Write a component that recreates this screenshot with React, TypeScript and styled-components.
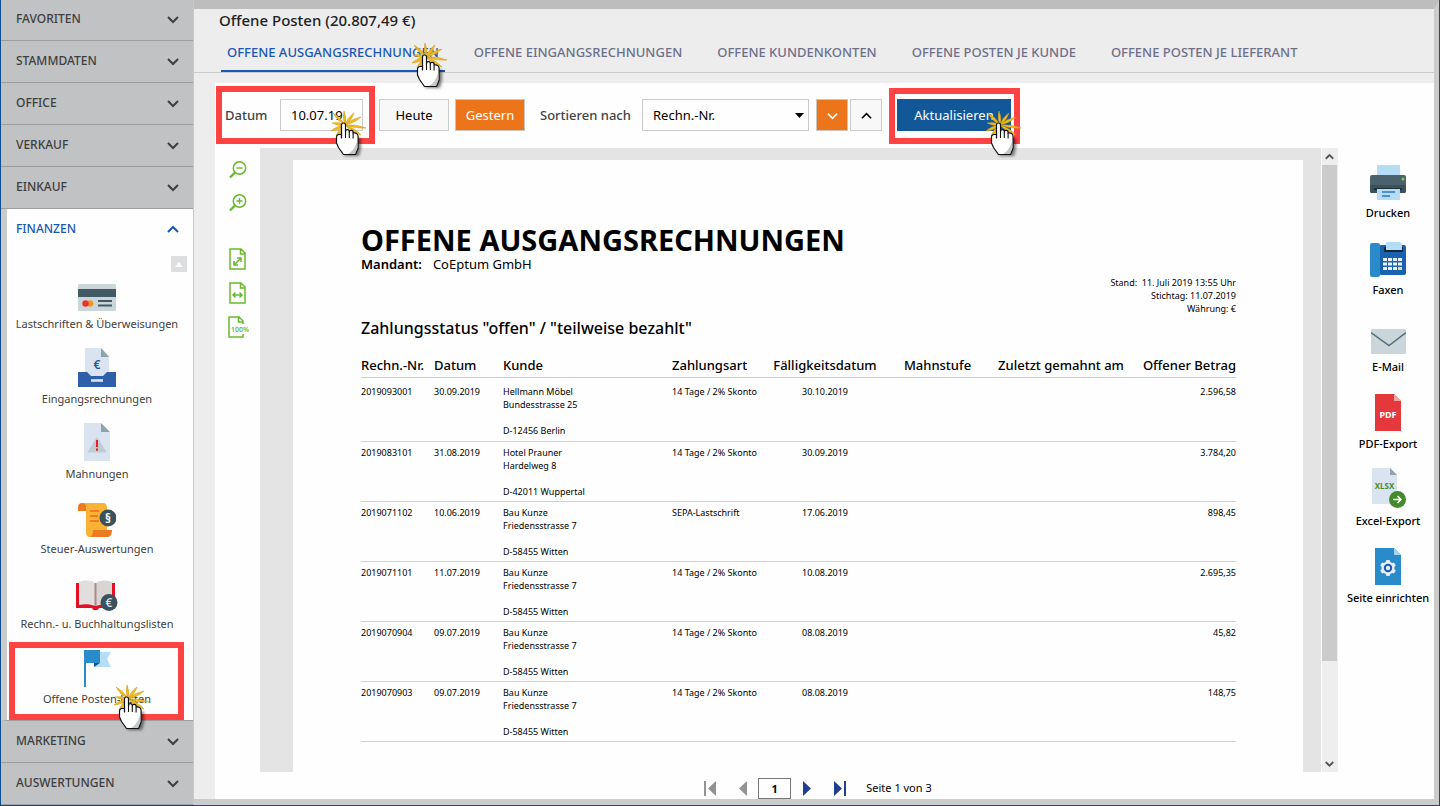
import React from 'react';
import styled, { createGlobalStyle, css } from 'styled-components';

const GlobalStyle = createGlobalStyle`
  * { box-sizing: border-box; }
  body {
    margin: 0;
    background: #fefefe;
    color: #000;
    font-family: 'Noto Sans', 'Open Sans', sans-serif;
    font-size: 13px;
    line-height: 18px;
  }
  button, input, select { font: inherit; color: inherit; margin: 0; }
  button { cursor: pointer; }
  svg { display: block; flex: none; }
`;

const RED = '#ff4242';

const Window = styled.div`
  display: flex;
  min-height: 100vh;
  border: 1px solid #0f4c91;
  border-top: 0;
`;

/* ---------- Sidebar ---------- */

const Sidebar = styled.nav`
  display: flex;
  flex-direction: column;
  flex: none;
  width: 193px;
  border-right: 1px solid #c9c9c9;
  background: #c0c2c4;
`;

const SectionButton = styled.button<{ $first?: boolean }>`
  display: flex;
  align-items: center;
  justify-content: space-between;
  width: 100%;
  height: ${(p) => (p.$first ? 41 : 42)}px;
  padding: 0 14px ${(p) => (p.$first ? 3 : 1)}px 15px;
  border: 0;
  border-bottom: 1px solid #9b9d9f;
  background: #c0c2c4;
  color: #3e3e40;
  font-size: 12px;
  font-weight: 500;
`;

const OpenSection = styled.section`
  flex: 1;
  border-left: 6px solid #cbcbcb;
  border-bottom: 1px solid #9b9d9f;
  background: #fefefe;
`;

const OpenSectionButton = styled(SectionButton)`
  padding-left: 9px;
  padding-bottom: 3px;
  border-bottom: 0;
  background: #fefefe;
  color: #1a57b5;
`;

const ScrollUpRow = styled.div`
  display: flex;
  justify-content: flex-end;
  padding: 5px 6px 0 0;
`;

const ScrollUp = styled.button`
  display: grid;
  place-items: center;
  width: 16px;
  height: 16px;
  padding: 0;
  border: 0;
  background: #dcdee0;
`;

const ModuleList = styled.div`
  display: grid;
  gap: 14px;
  padding: 0 6px 11px 0;
`;

const ModuleButton = styled.button`
  position: relative;
  display: flex;
  flex-direction: column;
  align-items: center;
  gap: 3px;
  width: 100%;
  padding: 0;
  border: 0;
  background: none;
  color: #3e3e40;
  font-size: 11px;
  line-height: 18px;
  white-space: nowrap;
`;

const ModuleIcon = styled.span`
  display: flex;
  align-items: flex-end;
  justify-content: center;
  height: 40px;
`;

/* ---------- Click markers ---------- */

const Marker = styled.span<{ $top: number; $right: number; $bottom: number; $left: number }>`
  position: absolute;
  z-index: 2;
  top: ${(p) => p.$top}px;
  right: ${(p) => p.$right}px;
  bottom: ${(p) => p.$bottom}px;
  left: ${(p) => p.$left}px;
  border: 6px solid ${RED};
  pointer-events: none;
`;

const HandHolder = styled.span<{ $right: number; $top: number }>`
  position: absolute;
  z-index: 3;
  right: ${(p) => p.$right}px;
  top: ${(p) => p.$top}px;
  pointer-events: none;
`;

const HandShadow = styled.path`
  filter: blur(1.5px);
`;

/* ---------- Main area ---------- */

const Main = styled.main`
  display: flex;
  flex-direction: column;
  flex: 1;
  min-width: 0;
  border-top: 9px solid #bdbdbd;
  border-right: 5px solid #cbcbcb;
  border-bottom: 6px solid #cbcbcb;
  background: #ededee;
`;

const PageTitle = styled.h1`
  margin: 0;
  padding: 0 25px 2px;
  font-size: 15px;
  line-height: 22px;
  font-weight: 500;
  color: #222;
`;

const Tabs = styled.div`
  display: flex;
  gap: 23px;
  padding: 0 27px;
  border-bottom: 1px solid #cdcdcd;
`;

const Tab = styled.button<{ $active?: boolean }>`
  position: relative;
  height: 39px;
  padding: 0 6px;
  border: 0;
  border-bottom: 2px solid ${(p) => (p.$active ? '#1a57b5' : 'transparent')};
  background: none;
  color: ${(p) => (p.$active ? '#1a57b5' : '#6d7089')};
  font-size: 13px;
  font-weight: 500;
  white-space: nowrap;
`;

const Card = styled.div`
  display: flex;
  flex-direction: column;
  flex: 1;
  margin: 10px 0 0 21px;
  background: #fefefe;
`;

const Toolbar = styled.div`
  display: flex;
  align-items: center;
  padding: 16px 10px 17px;
`;

const Group = styled.div`
  position: relative;
  display: flex;
  align-items: center;
`;

const Label = styled.label<{ $width: number }>`
  width: ${(p) => p.$width}px;
  color: #444;
  font-weight: 500;
  white-space: nowrap;
`;

const DateInput = styled.input`
  width: 83px;
  height: 32px;
  padding: 0 10px;
  border: 1px solid #cbcbcb;
  background: #fefefe;
  outline: 0;
`;

const ButtonRow = styled.div`
  display: flex;
  gap: 6px;
  margin: 0 15px 0 16px;
`;

const toneStyles = {
  plain: css`background: #f8f8f8; color: #000; border-color: #cbcbcb;`,
  orange: css`background: #ec751b; color: #fff; border-color: #cfc4bb;`,
  blue: css`background: #125899; color: #fff; border-color: #125899;`,
};

const ToolButton = styled.button<{ $tone: keyof typeof toneStyles; $width: number }>`
  display: grid;
  place-items: center;
  width: ${(p) => p.$width}px;
  height: 32px;
  padding: 0;
  border: 1px solid;
  ${(p) => toneStyles[p.$tone]}
`;

const SelectBox = styled.div`
  position: relative;
  width: 167px;
`;

const Select = styled.select`
  appearance: none;
  width: 100%;
  height: 32px;
  padding: 0 24px 0 10px;
  border: 1px solid #cbcbcb;
  border-radius: 0;
  background: #fefefe;
`;

const SelectArrow = styled.span`
  position: absolute;
  right: 5px;
  top: 14px;
  pointer-events: none;
`;

const Directions = styled.div`
  display: flex;
  gap: 2px;
  margin: 0 15px 0 7px;
`;

/* ---------- Viewer ---------- */

const Viewer = styled.div`
  display: flex;
  flex: 1;
`;

const ZoomTools = styled.div`
  display: flex;
  flex-direction: column;
  flex: none;
  align-items: center;
  width: 45px;
  padding: 13px 0 0;
`;

const IconButton = styled.button`
  display: grid;
  place-items: center;
  padding: 0;
  border: 0;
  background: none;
`;

const ZoomGroup = styled.div`
  display: grid;
  justify-items: center;
  gap: 15px;
  margin-bottom: 36px;
`;

const FitGroup = styled.div`
  display: grid;
  justify-items: center;
  gap: 12px;
`;

const Desk = styled.div`
  flex: 1;
  min-width: 0;
  display: flex;
  padding: 12px 18px 0 33px;
  background: #e4e4e4;
`;

const Sheet = styled.article`
  flex: 1;
  min-width: 0;
  padding: 65px 67px 28px 68px;
  background: #fefefe;
`;

const SheetTitle = styled.h2`
  margin: 0;
  font-size: 29px;
  line-height: 30px;
  font-weight: 700;
`;

const Client = styled.p`
  display: flex;
  gap: 11px;
  margin: 0 0 3px;
  font-size: 13px;
  line-height: 18px;
  strong { font-weight: 600; }
`;

const Meta = styled.p`
  margin: 0;
  font-size: 9px;
  line-height: 13px;
  text-align: right;
  white-space: pre-line;
`;

const Status = styled.h3`
  margin: 0;
  font-size: 16px;
  line-height: 26px;
  font-weight: 500;
`;

const ReportTable = styled.table`
  width: 100%;
  margin-top: 13px;
  border-collapse: collapse;
  table-layout: fixed;
`;

const HeadCell = styled.th<{ $align?: string }>`
  height: 23px;
  padding: 0;
  border-bottom: 1px solid #cbcbcb;
  font-size: 13px;
  line-height: 18px;
  font-weight: 500;
  text-align: ${(p) => p.$align || 'left'};
  white-space: nowrap;
`;

const Cell = styled.td<{ $align?: string; $first?: boolean }>`
  padding: ${(p) => (p.$first ? '7px 0 4px' : '4px 0 3px')};
  border-bottom: 1px solid #d2d2d2;
  font-size: 9px;
  line-height: 13px;
  text-align: ${(p) => p.$align || 'left'};
  vertical-align: top;
  white-space: pre-line;
`;

const ScrollBar = styled.div`
  display: flex;
  flex-direction: column;
  flex: none;
  width: 17px;
  border-left: 1px solid #fefefe;
  background: #eeeeee;
`;

const ScrollArrow = styled.button`
  display: grid;
  place-items: center;
  height: 17px;
  padding: 0 1px 0 0;
  border: 0;
  background: none;
`;

const ScrollTrack = styled.div`
  flex: 1;
`;

const ScrollThumb = styled.div`
  height: 84%;
  margin-right: 1px;
  background: #cbcbcb;
`;

const Actions = styled.div`
  display: flex;
  flex-direction: column;
  flex: none;
  gap: 15px;
  width: 96px;
  padding: 12px 0 0 4px;
`;

const ActionButton = styled.button`
  display: flex;
  flex-direction: column;
  align-items: center;
  gap: 4px;
  padding: 0;
  border: 0;
  background: none;
  font-size: 11px;
  line-height: 18px;
  font-weight: 500;
  white-space: nowrap;
`;

const ActionIcon = styled.span`
  display: flex;
  align-items: flex-end;
  justify-content: center;
  height: 40px;
`;

const Pager = styled.div`
  display: flex;
  align-items: center;
  justify-content: center;
  height: 27px;
  padding: 5px 13px 0 0;
  font-size: 11px;
`;

const PageInput = styled.input`
  width: 33px;
  height: 21px;
  margin: 0 12px 0 11px;
  padding: 0;
  border: 1px solid #777;
  background: #fefefe;
  font-weight: 700;
  text-align: center;
`;

const PageInfo = styled.span`
  margin-left: 20px;
`;

const PagerGap = styled.span`
  width: 23px;
`;

/* ---------- Drawings ---------- */

const Chevron = ({ up, size = 12, color = 'currentColor', stroke = 2 }: { up?: boolean; size?: number; color?: string; stroke?: number }) => (
  <svg width={size} height={size} viewBox="0 0 12 12" fill="none" stroke={color} strokeWidth={stroke}>
    <path d={up ? 'M1 9l5-5 5 5' : 'M1 4l5 5 5-5'} />
  </svg>
);

const sparkTips = [
  [2, 2], [13, 0], [23, 2], [30, 6], [35, 17], [30, 24], [0, 20], [1, 12], [5, 25],
];

const sparkRay = ([x, y]: number[]) => {
  const cx = 14;
  const cy = 14;
  const dx = x - cx;
  const dy = y - cy;
  const len = Math.hypot(dx, dy);
  const nx = (-dy / len) * 2.6;
  const ny = (dx / len) * 2.6;
  const mx = cx + dx * 0.5;
  const my = cy + dy * 0.5;
  return `M${cx} ${cy}Q${mx + nx} ${my + ny} ${x} ${y}Q${mx - nx} ${my - ny} ${cx} ${cy}z`;
};

const Hand = ({ right, top }: { right: number; top: number }) => (
  <HandHolder $right={right} $top={top}>
    <svg width="38" height="50" viewBox="0 0 38 50">
      <g fill="#f0bb20" stroke="#c99a17" strokeWidth=".5" strokeLinejoin="round">
        {sparkTips.map((tip) => <path key={tip.join()} d={sparkRay(tip)} />)}
      </g>
      <HandShadow d="M9 26l-1 7 6 12h14l2-8V27z" fill="#000" opacity=".5" />
      <path
        d="M10.5 27V14a2 2 0 0 1 4 0v6.500a1.900 1.900 0 0 1 3.800 0v.500a1.900 1.900 0 0 1 3.800.500v.500c2.800-.500 5 .500 5 3.500V37l-2.600 6.500H12.500L7.500 36.500 5.500 32v-6c0-2 2-3 5-2.500z"
        fill="#fff"
        stroke="#111"
        strokeWidth="1.2"
        strokeLinejoin="round"
      />
      <path d="M10.500 22v5M14.500 20v7M18.300 21v6M22.100 22v5.500" stroke="#111" strokeWidth="1.1" fill="none" />
      <path d="M26.500 29v8l-2.400 5.900H17c4-2 7-6 9.500-13.900z" fill="#999" opacity=".55" />
    </svg>
  </HandHolder>
);

const CardIcon = () => (
  <svg width="38" height="28" viewBox="0 0 38 28">
    <rect width="38" height="27" rx="1.5" fill="#cbd6da" />
    <rect y="5" width="38" height="8" fill="#415a65" />
    <circle cx="12" cy="19.5" r="3.2" fill="#f79420" />
    <circle cx="7.5" cy="19.5" r="3.2" fill="#e5352b" />
    <path d="M20 17h14M20 21.500h14" stroke="#415a65" strokeWidth="1.8" />
  </svg>
);

const InboxIcon = () => (
  <svg width="38" height="39" viewBox="0 0 38 39">
    <path d="M7 0h16l8 8v22H7z" fill="#dae4f1" />
    <path d="M23 0l8 9h-8z" fill="#8fa3ad" />
    <path d="M0 24h9l4 4h12l4-4h9v15H0z" fill="#2f5fa9" />
    <path d="M13 32.500h12" stroke="#dae4f1" strokeWidth="2.6" />
    <text x="19" y="21" fontSize="12" fontWeight="600" textAnchor="middle" fill="#1d4fa5">€</text>
  </svg>
);

const WarningIcon = () => (
  <svg width="26" height="39" viewBox="0 0 26 39">
    <path d="M0 0h17l9 9v29H0z" fill="#dae4f1" />
    <path d="M17 0l9 9h-9z" fill="#8fa3ad" />
    <path d="M13 14.500 22 29H4z" fill="#bfcdd2" stroke="#bfcdd2" strokeWidth="1" strokeLinejoin="round" />
    <path d="M13 17v7M13 25.500v2.200" stroke="#e3202b" strokeWidth="2" />
  </svg>
);

const ScrollIcon = () => (
  <svg width="38" height="34" viewBox="0 0 38 34">
    <path d="M4 0h21c3 0 4 2 4 5v22h4v3c0 3-2 4-4 4H12c-3 0-4-2-4-4V7z" fill="#f9b233" />
    <path d="M0 8V4c0-3 2-4 4-4s4 1 4 4v4z" fill="#ec7b23" />
    <path d="M15 27h19c0 5-2 7-5 7H12c2-1 3-3 3-7z" fill="#ec7b23" />
    <path d="M12 8h9M12 13h8M12 18h9" stroke="#ec6b1f" strokeWidth="1.5" />
    <circle cx="30" cy="15" r="8.5" fill="#3b515c" />
    <text x="30" y="19.5" fontSize="12" fontWeight="700" textAnchor="middle" fill="#fff">§</text>
  </svg>
);

const BookIcon = () => (
  <svg width="42" height="32" viewBox="0 0 42 32">
    <path d="M0 3h39v25H23c-1 3-6 3-7 0H0z" fill="#e30f24" />
    <path d="M3 2c6-2 12-2 16 1v23c-5-2-11-2-16-1z" fill="#e2dede" />
    <path d="M36 2c-6-2-12-2-16 1v23c5-2 11-2 16-1z" fill="#dad5d5" />
    <path d="M19.500 3v23" stroke="#a98c86" strokeWidth="2" />
    <circle cx="33" cy="22.5" r="8.5" fill="#3b515c" />
    <text x="33" y="27" fontSize="12" fontWeight="500" textAnchor="middle" fill="#dfe6e8">€</text>
  </svg>
);

const FlagIcon = () => (
  <svg width="27" height="37" viewBox="0 0 27 37">
    <path d="M10 2h17l-4 7 4 8H10z" fill="#b5ddf6" />
    <path d="M10 13h6l-6 4z" fill="#15538f" />
    <path d="M0 0h16v13H2v24H0z" fill="#2a8bcb" />
  </svg>
);

const PrinterIcon = () => (
  <svg width="36" height="35" viewBox="0 0 36 35">
    <path d="M7 0h23v11H7z" fill="#b5ddf6" />
    <rect y="10" width="36" height="18" rx="2" fill="#4b626d" />
    <path d="M0 20h36v6a2 2 0 0 1-2 2H2a2 2 0 0 1-2-2z" fill="#3b515c" />
    <circle cx="33" cy="14" r="1.5" fill="#8bc53f" />
    <path d="M4 23h28v2H4z" fill="#1f2f38" />
    <path d="M7 24h23v11H7z" fill="#b5ddf6" />
    <path d="M12 27h13M12 31h8" stroke="#2a78c0" strokeWidth="1.5" />
  </svg>
);

const FaxIcon = () => (
  <svg width="36" height="35" viewBox="0 0 36 35">
    <rect x="9" y="3" width="27" height="30" rx="2" fill="#1a62b0" />
    <rect y="1" width="10" height="34" rx="2" fill="#2a8bcb" />
    <path d="M14 5h19v5H14z" fill="#14273d" />
    <path d="M16 0h14l2 2v6H16z" fill="#b5ddf6" />
    {[16, 20.5, 25].map((y) =>
      [13, 18, 23, 28].map((x) => (
        <rect key={`${x}-${y}`} x={x} y={y} width="4" height="3" fill={y === 25 && x === 28 ? '#dfe08b' : '#e6f1fa'} />
      )),
    )}
  </svg>
);

const MailIcon = () => (
  <svg width="35" height="25" viewBox="0 0 35 25">
    <rect width="35" height="25" rx="1" fill="#cbd6da" />
    <path d="M0 3.500 18 16.500 35 3.500" fill="none" stroke="#546e7a" strokeWidth="1.5" />
  </svg>
);

const PdfIcon = () => (
  <svg width="26" height="37" viewBox="0 0 26 37">
    <path d="M0 0h19l7 7v30H0z" fill="#e5383c" />
    <path d="M19 0l7 7h-7z" fill="#f3a6a2" />
    <text x="13" y="24" fontSize="9" fontWeight="700" textAnchor="middle" fill="#fff">PDF</text>
  </svg>
);

const XlsxIcon = () => (
  <svg width="35" height="40" viewBox="0 0 35 40">
    <path d="M1 0h18l7 7v29H1z" fill="#dae4f1" />
    <path d="M19 0l7 7h-7z" fill="#8fa3ad" />
    <text x="13.5" y="21" fontSize="8" fontWeight="700" textAnchor="middle" fill="#4a8a2b">XLSX</text>
    <circle cx="26.5" cy="31.5" r="8.5" fill="#438a2c" />
    <path d="M22 31.500h8M26.500 28 30 31.500l-3.500 3.500" fill="none" stroke="#fff" strokeWidth="1.5" />
  </svg>
);

const SetupIcon = () => (
  <svg width="26" height="37" viewBox="0 0 26 37">
    <path d="M0 0h19l7 7v30H0z" fill="#2a8bcb" />
    <path d="M19 0l7 7h-7z" fill="#a5d2ef" />
    <g fill="#e6eef5">
      <circle cx="13" cy="20" r="6.5" />
      {[0, 60, 120].map((a) => (
        <rect key={a} x="11" y="12" width="4" height="16" rx="1" transform={`rotate(${a} 13 20)`} />
      ))}
    </g>
    <circle cx="13" cy="20" r="3.2" fill="#e6eef5" stroke="#1a57b5" strokeWidth="2" />
  </svg>
);

const GREEN = '#6ab92c';

const Magnifier = ({ plus }: { plus?: boolean }) => (
  <svg width="18" height="18" viewBox="0 0 18 18" fill="none" stroke={GREEN}>
    <circle cx="10.5" cy="7" r="6.2" strokeWidth="1.5" />
    <path d="M6 11.500 1 16.500" strokeWidth="2.4" />
    <path d={plus ? 'M7.500 7h6M10.500 4v6' : 'M7.500 7h6'} strokeWidth="1.4" />
  </svg>
);

const FitPage = ({ kind }: { kind: 'page' | 'width' | 'full' }) => (
  <svg width="22" height="22" viewBox="0 0 22 22" fill="none" stroke={GREEN} strokeWidth="1.5">
    {kind === 'full' ? (
      <>
        <path d="M16 8V5l-4-4H2v20h14v-3M11.500 1v5H16" />
        <text x="13" y="16" fontSize="7" fontWeight="600" textAnchor="middle" fill={GREEN} stroke="none">100%</text>
      </>
    ) : (
      <>
        <path d="M18 21H3V1h11l4 4zM13.500 1v5H18" />
        {kind === 'page' ? (
          <path d="M7.500 16.500l6-6M7 13v4h4M10 10h4v4" />
        ) : (
          <path d="M6 13h9M8.500 10.500 6 13l2.500 2.500M12.500 10.500 15 13l-2.500 2.500" />
        )}
      </>
    )}
  </svg>
);

const PagerArrow = ({ back, end }: { back?: boolean; end?: boolean }) => (
  <svg width={end ? 12 : 8} height="15" viewBox={end ? '0 0 12 15' : '0 0 8 15'} fill={back ? '#939395' : '#213f8f'}>
    {back ? (
      <path d={end ? 'M0 0h2v15H0zM12 0v15L4 7.500z' : 'M8 0v15L0 7.500z'} />
    ) : (
      <path d={end ? 'M10 0h2v15h-2zM0 0l8 7.500L0 15z' : 'M0 0l8 7.500L0 15z'} />
    )}
  </svg>
);

/* ---------- Data ---------- */

const modules = [
  { label: 'Lastschriften & Überweisungen', icon: <CardIcon /> },
  { label: 'Eingangsrechnungen', icon: <InboxIcon /> },
  { label: 'Mahnungen', icon: <WarningIcon /> },
  { label: 'Steuer-Auswertungen', icon: <ScrollIcon /> },
  { label: 'Rechn.- u. Buchhaltungslisten', icon: <BookIcon /> },
  { label: 'Offene Posten-Listen', icon: <FlagIcon />, marked: true },
];

const tabs = [
  'OFFENE AUSGANGSRECHNUNGEN',
  'OFFENE EINGANGSRECHNUNGEN',
  'OFFENE KUNDENKONTEN',
  'OFFENE POSTEN JE KUNDE',
  'OFFENE POSTEN JE LIEFERANT',
];

const columns = [
  { title: 'Rechn.-Nr.', width: 73 },
  { title: 'Datum', width: 69 },
  { title: 'Kunde', width: 169 },
  { title: 'Zahlungsart', width: 93 },
  { title: 'Fälligkeitsdatum', width: 120, align: 'center' },
  { title: 'Mahnstufe', width: 105, align: 'center' },
  { title: 'Zuletzt gemahnt am', width: 142, align: 'center' },
  { title: 'Offener Betrag', width: 104, align: 'right' },
];

const rows = [
  ['2019093001', '30.09.2019', 'Hellmann Möbel\nBundesstrasse 25\n\nD-12456 Berlin', '14 Tage / 2% Skonto', '30.10.2019', '', '', '2.596,58'],
  ['2019083101', '31.08.2019', 'Hotel Prauner\nHardelweg 8\n\nD-42011 Wuppertal', '14 Tage / 2% Skonto', '30.09.2019', '', '', '3.784,20'],
  ['2019071102', '10.06.2019', 'Bau Kunze\nFriedensstrasse 7\n\nD-58455 Witten', 'SEPA-Lastschrift', '17.06.2019', '', '', '898,45'],
  ['2019071101', '11.07.2019', 'Bau Kunze\nFriedensstrasse 7\n\nD-58455 Witten', '14 Tage / 2% Skonto', '10.08.2019', '', '', '2.695,35'],
  ['2019070904', '09.07.2019', 'Bau Kunze\nFriedensstrasse 7\n\nD-58455 Witten', '14 Tage / 2% Skonto', '08.08.2019', '', '', '45,82'],
  ['2019070903', '09.07.2019', 'Bau Kunze\nFriedensstrasse 7\n\nD-58455 Witten', '14 Tage / 2% Skonto', '08.08.2019', '', '', '148,75'],
];

const actions = [
  { label: 'Drucken', icon: <PrinterIcon /> },
  { label: 'Faxen', icon: <FaxIcon /> },
  { label: 'E-Mail', icon: <MailIcon /> },
  { label: 'PDF-Export', icon: <PdfIcon /> },
  { label: 'Excel-Export', icon: <XlsxIcon /> },
  { label: 'Seite einrichten', icon: <SetupIcon /> },
];

export default function App() {
  return (
    <Window>
      <GlobalStyle />
      <Sidebar>
        {['FAVORITEN', 'STAMMDATEN', 'OFFICE', 'VERKAUF', 'EINKAUF'].map((name, i) => (
          <SectionButton key={name} $first={i === 0}>
            {name}
            <Chevron />
          </SectionButton>
        ))}
        <OpenSection>
          <OpenSectionButton>
            FINANZEN
            <Chevron up />
          </OpenSectionButton>
          <ScrollUpRow>
            <ScrollUp aria-label="Nach oben">
              <svg width="8" height="5" viewBox="0 0 8 5"><path d="M4 0l4 5H0z" fill="#fff" /></svg>
            </ScrollUp>
          </ScrollUpRow>
          <ModuleList>
            {modules.map((m) => (
              <ModuleButton key={m.label}>
                <ModuleIcon>{m.icon}</ModuleIcon>
                {m.label}
                {m.marked && <Marker $top={-5} $right={3} $bottom={-12} $left={2} />}
                {m.marked && <Hand right={35} top={38} />}
              </ModuleButton>
            ))}
          </ModuleList>
        </OpenSection>
        {['MARKETING', 'AUSWERTUNGEN'].map((name) => (
          <SectionButton key={name}>
            {name}
            <Chevron />
          </SectionButton>
        ))}
      </Sidebar>

      <Main>
        <PageTitle>Offene Posten (20.807,49 €)</PageTitle>
        <Tabs role="tablist">
          {tabs.map((t, i) => (
            <Tab key={t} role="tab" aria-selected={i === 0} $active={i === 0}>
              {t}
              {i === 0 && <Hand right={-5} top={10} />}
            </Tab>
          ))}
        </Tabs>

        <Card>
          <Toolbar>
            <Group>
              <Label $width={55} htmlFor="datum">Datum</Label>
              <DateInput id="datum" type="text" defaultValue="10.07.19" />
              <Marker $top={-13} $right={-12} $bottom={-13} $left={-9} />
              <Hand right={-6} top={12} />
            </Group>
            <ButtonRow>
              <ToolButton $tone="plain" $width={70}>Heute</ToolButton>
              <ToolButton $tone="orange" $width={70}>Gestern</ToolButton>
            </ButtonRow>
            <Group>
              <Label $width={102} htmlFor="sortierung">Sortieren nach</Label>
              <SelectBox>
                <Select id="sortierung" defaultValue="nr">
                  <option value="nr">Rechn.-Nr.</option>
                </Select>
                <SelectArrow>
                  <svg width="9" height="5" viewBox="0 0 9 5"><path d="M0 0h9L4.500 5z" /></svg>
                </SelectArrow>
              </SelectBox>
            </Group>
            <Directions>
              <ToolButton $tone="orange" $width={32} aria-label="Absteigend"><Chevron size={11} stroke={1.8} /></ToolButton>
              <ToolButton $tone="plain" $width={32} aria-label="Aufsteigend"><Chevron up size={11} stroke={1.8} /></ToolButton>
            </Directions>
            <Group>
              <ToolButton $tone="blue" $width={114}>Aktualisieren</ToolButton>
              <Marker $top={-11} $right={-9} $bottom={-13} $left={-8} />
              <Hand right={-13} top={12} />
            </Group>
          </Toolbar>

          <Viewer>
            <ZoomTools>
              <ZoomGroup>
                <IconButton aria-label="Verkleinern"><Magnifier /></IconButton>
                <IconButton aria-label="Vergrößern"><Magnifier plus /></IconButton>
              </ZoomGroup>
              <FitGroup>
                <IconButton aria-label="Ganze Seite"><FitPage kind="page" /></IconButton>
                <IconButton aria-label="Seitenbreite"><FitPage kind="width" /></IconButton>
                <IconButton aria-label="Originalgröße"><FitPage kind="full" /></IconButton>
              </FitGroup>
            </ZoomTools>

            <Desk>
              <Sheet>
                <SheetTitle>OFFENE AUSGANGSRECHNUNGEN</SheetTitle>
                <Client><strong>Mandant:</strong> CoEptum GmbH</Client>
                <Meta>{'Stand: \u00a011. Juli 2019 13:55 Uhr\nStichtag: 11.07.2019\nWährung: €'}</Meta>
                <Status>Zahlungsstatus "offen" / "teilweise bezahlt"</Status>
                <ReportTable>
                  <colgroup>
                    {columns.map((c) => <col key={c.title} width={c.width} />)}
                  </colgroup>
                  <thead>
                    <tr>
                      {columns.map((c) => <HeadCell key={c.title} $align={c.align}>{c.title}</HeadCell>)}
                    </tr>
                  </thead>
                  <tbody>
                    {rows.map((r, ri) => (
                      <tr key={r[0]}>
                        {r.map((v, ci) => (
                          <Cell key={columns[ci].title} $align={columns[ci].align} $first={ri === 0}>{v}</Cell>
                        ))}
                      </tr>
                    ))}
                  </tbody>
                </ReportTable>
              </Sheet>
            </Desk>

            <ScrollBar>
              <ScrollArrow aria-label="Nach oben blättern"><Chevron up size={9} color="#555" stroke={2.4} /></ScrollArrow>
              <ScrollTrack><ScrollThumb /></ScrollTrack>
              <ScrollArrow aria-label="Nach unten blättern"><Chevron size={9} color="#555" stroke={2.4} /></ScrollArrow>
            </ScrollBar>

            <Actions>
              {actions.map((a) => (
                <ActionButton key={a.label}>
                  <ActionIcon>{a.icon}</ActionIcon>
                  {a.label}
                </ActionButton>
              ))}
            </Actions>
          </Viewer>

          <Pager>
            <IconButton aria-label="Erste Seite"><PagerArrow back end /></IconButton>
            <PagerGap />
            <IconButton aria-label="Vorherige Seite"><PagerArrow back /></IconButton>
            <PageInput aria-label="Seite" defaultValue="1" />
            <IconButton aria-label="Nächste Seite"><PagerArrow /></IconButton>
            <PagerGap />
            <IconButton aria-label="Letzte Seite"><PagerArrow end /></IconButton>
            <PageInfo>Seite 1 von 3</PageInfo>
          </Pager>
        </Card>
      </Main>
    </Window>
  );
}
